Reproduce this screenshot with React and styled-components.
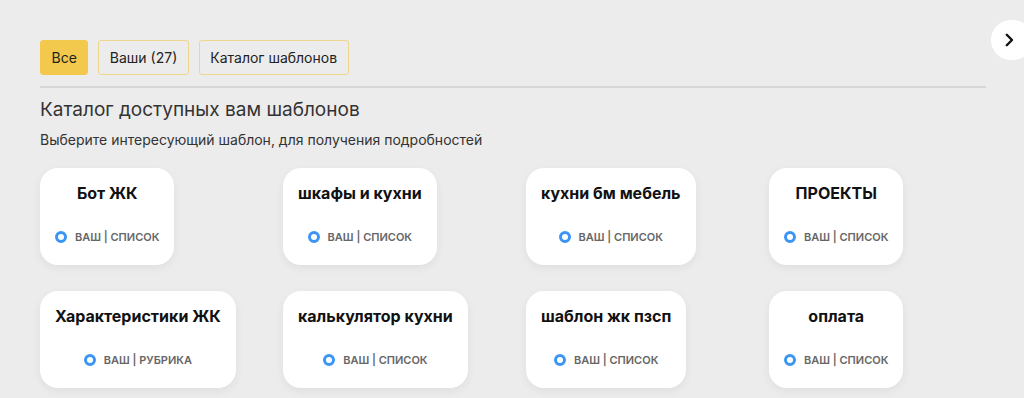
import styled, { createGlobalStyle } from 'styled-components';

const GlobalStyle = createGlobalStyle`
  html, body {
    margin: 0;
    padding: 0;
    background: #ececec;
    font-family: Inter, "Noto Sans", sans-serif;
    color: #222;
  }
`;

const Page = styled.div`
  position: relative;
  height: 398px;
  overflow: hidden;
  padding: 40px 38px 0 40px;
  box-sizing: border-box;
`;

const Tabs = styled.div`
  display: flex;
  gap: 10px;
  padding-bottom: 11px;
  border-bottom: 2px solid #d6d6d6;
`;

const Tab = styled.button`
  height: 35px;
  padding: 0 10.5px;
  border-radius: 3px;
  border: 1px solid ${(p) => (p.$active ? '#f2c94c' : '#f0d68a')};
  background: ${(p) => (p.$active ? '#f2c94c' : 'transparent')};
  font-family: inherit;
  font-size: 14px;
  color: #222;
  cursor: pointer;
`;

const Heading = styled.h2`
  margin: 10px 0 0;
  font-size: 19px;
  font-weight: 400;
  color: #333;
  line-height: 24px;
`;

const Subtitle = styled.p`
  margin: 9px 0 0;
  font-size: 14px;
  color: #333;
  line-height: 18px;
`;

const Grid = styled.div`
  margin-top: 19px;
  display: grid;
  grid-template-columns: repeat(4, 243px);
  row-gap: 26px;
  justify-items: start;
`;

const Card = styled.div`
  background: #fff;
  border-radius: 18px;
  box-shadow: 0 3px 10px rgba(0, 0, 0, 0.06);
  padding: 15px 15px 0;
  height: 97px;
  box-sizing: border-box;
  min-width: 131px;
  display: flex;
  flex-direction: column;
  align-items: center;
  cursor: pointer;
`;

const CardTitle = styled.h3`
  margin: 0;
  font-size: 16px;
  font-weight: 700;
  color: #111;
  line-height: 20px;
  white-space: nowrap;
`;

const Meta = styled.div`
  margin-top: 27px;
  display: flex;
  align-items: center;
  gap: 8px;
  font-size: 11px;
  font-weight: 600;
  color: #666;
  text-transform: uppercase;
`;

const Ring = styled.span`
  width: 6px;
  height: 6px;
  border: 3px solid #3b95f5;
  border-radius: 50%;
`;

const NextButton = styled.button`
  position: absolute;
  top: 20px;
  left: 991px;
  width: 42px;
  height: 40px;
  border: none;
  border-radius: 20px;
  background: #fff;
  display: flex;
  align-items: center;
  padding-left: 9px;
  cursor: pointer;
`;

const templates = [
  { title: 'Бот ЖК', type: 'список' },
  { title: 'шкафы и кухни', type: 'список' },
  { title: 'кухни бм мебель', type: 'список' },
  { title: 'ПРОЕКТЫ', type: 'список' },
  { title: 'Характеристики ЖК', type: 'рубрика' },
  { title: 'калькулятор кухни', type: 'список' },
  { title: 'шаблон жк пзсп', type: 'список' },
  { title: 'оплата', type: 'список' },
];

export default function App() {
  return (
    <Page>
      <GlobalStyle />
      <Tabs>
        <Tab $active>Все</Tab>
        <Tab>Ваши (27)</Tab>
        <Tab>Каталог шаблонов</Tab>
      </Tabs>
      <Heading>Каталог доступных вам шаблонов</Heading>
      <Subtitle>Выберите интересующий шаблон, для получения подробностей</Subtitle>
      <Grid>
        {templates.map((t, i) => (
          <Card key={i}>
            <CardTitle>{t.title}</CardTitle>
            <Meta>
              <Ring />
              <span>ваш | {t.type}</span>
            </Meta>
          </Card>
        ))}
      </Grid>
      <NextButton>
        <svg width="18" height="18" viewBox="0 0 24 24" fill="none" stroke="#111" strokeWidth="3.2" strokeLinecap="round" strokeLinejoin="round">
          <path d="M9 5l7 7-7 7" />
        </svg>
      </NextButton>
    </Page>
  );
}
